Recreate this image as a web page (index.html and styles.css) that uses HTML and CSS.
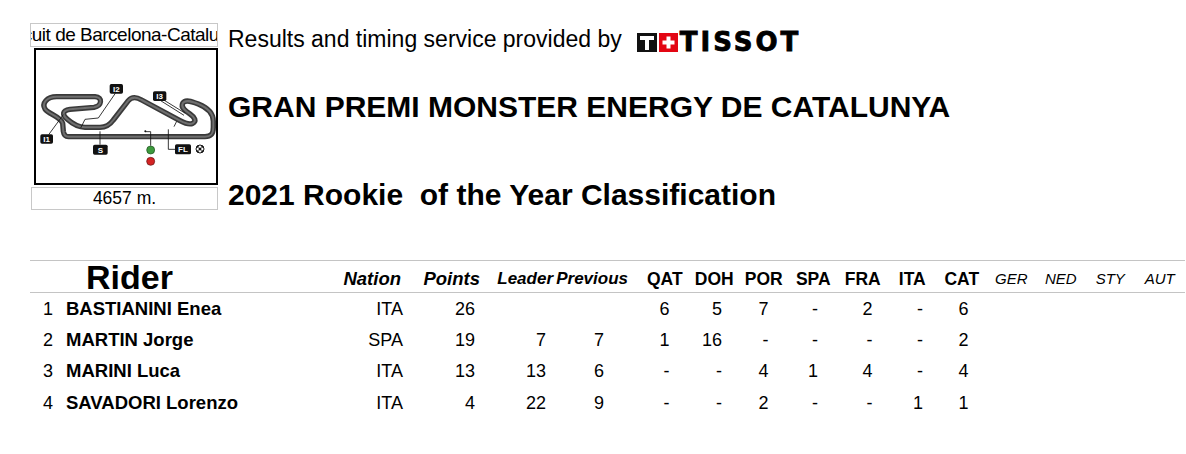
FILE: index.html
```html
<!DOCTYPE html>
<html lang="en">
<head>
<meta charset="utf-8">
<title>2021 Rookie of the Year Classification</title>
<link rel="stylesheet" href="styles.css">
</head>
<body>
<div class="top">
  <div class="circuit">
    <div class="cname"><span>Circuit de Barcelona-Catalunya</span></div>
    <div class="map">
      <svg width="180" height="133" viewBox="18 18 540 399" xmlns="http://www.w3.org/2000/svg">
        <defs>
          <clipPath id="flagclip"><circle cx="510" cy="315" r="12"/></clipPath>
        </defs>
        <g fill="none" stroke-linejoin="round" stroke-linecap="round">
          <path class="trk-out" d="M115 278 L525 278 C545 278 550 268 550 250 L550 232 C550 205 530 190 505 180 C485 172 465 165 458 178 C452 190 465 200 480 210 C495 220 500 232 488 238 C478 243 465 238 450 230 L335 168 C318 158 305 158 295 170 L250 228 C240 242 228 250 210 250 L165 250 C145 250 128 240 112 226 C96 212 96 200 120 196 L192 190 C215 186 220 160 195 158 L80 158 C50 158 35 178 45 195 C55 210 92 218 98 238 L100 262 C102 275 108 278 115 278 Z"/>
          <path class="trk-in" d="M115 278 L525 278 C545 278 550 268 550 250 L550 232 C550 205 530 190 505 180 C485 172 465 165 458 178 C452 190 465 200 480 210 C495 220 500 232 488 238 C478 243 465 238 450 230 L335 168 C318 158 305 158 295 170 L250 228 C240 242 228 250 210 250 L165 250 C145 250 128 240 112 226 C96 212 96 200 120 196 L192 190 C215 186 220 160 195 158 L80 158 C50 158 35 178 45 195 C55 210 92 218 98 238 L100 262 C102 275 108 278 115 278 Z"/>
        </g>
        <g class="ptr" fill="none">
          <path d="M56 272 L100 212"/>
          <path d="M256 148 L205 222 L165 226 L152 252"/>
          <path d="M392 170 L462 214"/>
          <path d="M398 166 L466 208"/>
          <path d="M440 232 L432 248"/>
          <path d="M415 256 L415 316 L436 316"/>
          <path d="M210 262 L210 302"/>
          <path d="M362 305 L362 263 L346 263"/>
        </g>
        <circle cx="346" cy="262" r="3" fill="#111"/>
        <circle cx="362" cy="318" r="12" fill="#3d9a3d" stroke="#1d4d1d" stroke-width="2"/>
        <circle cx="362" cy="352" r="12" fill="#d42323" stroke="#5a1010" stroke-width="2"/>
        <g class="mk">
          <rect x="31" y="271" width="38" height="28" rx="5"/>
          <rect x="239" y="120" width="40" height="29" rx="5"/>
          <rect x="369" y="142" width="40" height="29" rx="5"/>
          <rect x="189" y="302" width="44" height="30" rx="5"/>
          <rect x="435" y="301" width="48" height="30" rx="5"/>
        </g>
        <g class="mk-t">
          <text x="50" y="294">I1</text>
          <text x="259" y="144">I2</text>
          <text x="389" y="166">I3</text>
          <text x="211" y="326">S</text>
          <text x="459" y="325">FL</text>
        </g>
        <g clip-path="url(#flagclip)">
          <circle cx="510" cy="315" r="12" fill="#fff"/>
          <rect x="498" y="303" width="8" height="8" fill="#111"/>
          <rect x="514" y="303" width="8" height="8" fill="#111"/>
          <rect x="506" y="311" width="8" height="8" fill="#111"/>
          <rect x="498" y="319" width="8" height="8" fill="#111"/>
          <rect x="514" y="319" width="8" height="8" fill="#111"/>
        </g>
        <circle cx="510" cy="315" r="12" fill="none" stroke="#111" stroke-width="3"/>
      </svg>
    </div>
    <div class="dist">4657 m.</div>
  </div>
  <div class="heads">
    <div class="provider">
      <span class="prov-text">Results and timing service provided by</span>
      <span class="tissot">
        <svg class="tissot-mark" width="41" height="19" viewBox="0 0 41 19" xmlns="http://www.w3.org/2000/svg">
          <rect x="0" y="0" width="20" height="19" fill="#111"/>
          <rect x="3" y="3" width="14" height="4" fill="#fff"/>
          <rect x="8" y="7" width="4" height="10" fill="#fff"/>
          <rect x="22" y="0" width="19" height="19" fill="#e30613"/>
          <rect x="29.5" y="3.5" width="4" height="12" fill="#fff"/>
          <rect x="25.5" y="7.5" width="12" height="4" fill="#fff"/>
        </svg>
        <span class="tissot-word">TISSOT</span>
      </span>
    </div>
    <h1 class="event">GRAN PREMI MONSTER ENERGY DE CATALUNYA</h1>
    <h2 class="classif">2021 Rookie&nbsp; of the Year Classification</h2>
  </div>
</div>

<table class="standings">
  <colgroup>
    <col class="c-pos"><col class="c-name"><col class="c-nat"><col class="c-pts"><col class="c-ldr"><col class="c-prv">
    <col class="c-race"><col class="c-race"><col class="c-race"><col class="c-race"><col class="c-race"><col class="c-race"><col class="c-race">
    <col class="c-race"><col class="c-race"><col class="c-race"><col class="c-race">
  </colgroup>
  <thead>
    <tr>
      <th class="h-rider" colspan="2">Rider</th>
      <th class="h-nat">Nation</th>
      <th class="h-pts">Points</th>
      <th class="h-ldr">Leader</th>
      <th class="h-prv">Previous</th>
      <th class="h-race">QAT</th>
      <th class="h-race">DOH</th>
      <th class="h-race">POR</th>
      <th class="h-race">SPA</th>
      <th class="h-race">FRA</th>
      <th class="h-race">ITA</th>
      <th class="h-race">CAT</th>
      <th class="h-future">GER</th>
      <th class="h-future">NED</th>
      <th class="h-future">STY</th>
      <th class="h-future">AUT</th>
    </tr>
  </thead>
  <tbody>
    <tr>
      <td class="pos">1</td><td class="name">BASTIANINI Enea</td><td class="nat">ITA</td><td class="pts">26</td><td class="ldr"></td><td class="prv"></td>
      <td class="r qat">6</td><td class="r doh">5</td><td class="r por">7</td><td class="r spa">-</td><td class="r fra">2</td><td class="r ita">-</td><td class="r cat">6</td>
      <td class="r"></td><td class="r"></td><td class="r"></td><td class="r"></td>
    </tr>
    <tr>
      <td class="pos">2</td><td class="name">MARTIN Jorge</td><td class="nat">SPA</td><td class="pts">19</td><td class="ldr">7</td><td class="prv">7</td>
      <td class="r qat">1</td><td class="r doh">16</td><td class="r por">-</td><td class="r spa">-</td><td class="r fra">-</td><td class="r ita">-</td><td class="r cat">2</td>
      <td class="r"></td><td class="r"></td><td class="r"></td><td class="r"></td>
    </tr>
    <tr>
      <td class="pos">3</td><td class="name">MARINI Luca</td><td class="nat">ITA</td><td class="pts">13</td><td class="ldr">13</td><td class="prv">6</td>
      <td class="r qat">-</td><td class="r doh">-</td><td class="r por">4</td><td class="r spa">1</td><td class="r fra">4</td><td class="r ita">-</td><td class="r cat">4</td>
      <td class="r"></td><td class="r"></td><td class="r"></td><td class="r"></td>
    </tr>
    <tr>
      <td class="pos">4</td><td class="name">SAVADORI Lorenzo</td><td class="nat">ITA</td><td class="pts">4</td><td class="ldr">22</td><td class="prv">9</td>
      <td class="r qat">-</td><td class="r doh">-</td><td class="r por">2</td><td class="r spa">-</td><td class="r fra">-</td><td class="r ita">1</td><td class="r cat">1</td>
      <td class="r"></td><td class="r"></td><td class="r"></td><td class="r"></td>
    </tr>
  </tbody>
</table>
</body>
</html>
```

FILE: styles.css
```css
html, body {
  margin: 0;
  padding: 0;
  background: #fff;
}

body {
  font-family: "Liberation Sans", Arial, sans-serif;
  color: #000;
}

.top {
  display: flex;
  height: 260px;
  box-sizing: border-box;
  padding-top: 23px;
}

/* ---------- circuit panel ---------- */
.circuit {
  margin-left: 30px;
  width: 188px;
  display: flex;
  flex-direction: column;
}

.cname {
  height: 22px;
  border: 1px solid #c8c8c8;
  display: flex;
  justify-content: center;
  overflow: hidden;
  font-size: 19px;
  letter-spacing: -0.5px;
  line-height: 22px;
  white-space: nowrap;
}

.cname span {
  flex-shrink: 0;
}

.map {
  margin: 1px 0 0 4px;
  width: 180px;
  height: 133px;
  border: 2px solid #000;
}

.map svg {
  display: block;
}

.trk-out {
  stroke: #3a3a3a;
  stroke-width: 16;
}

.trk-in {
  stroke: #6f6f6f;
  stroke-width: 6;
}

.ptr path {
  stroke: #111;
  stroke-width: 2.5;
}

.mk rect {
  fill: #111;
}

.mk-t text {
  fill: #fff;
  font-family: "Liberation Sans", Arial, sans-serif;
  font-weight: bold;
  font-size: 24px;
  text-anchor: middle;
}

.dist {
  margin: 2px 0 0 1px;
  height: 21px;
  border: 1px solid #c8c8c8;
  text-align: center;
  font-size: 17.5px;
  line-height: 21px;
}

/* ---------- headings ---------- */
.heads {
  margin-left: 10px;
  padding-top: 3px;
}

.provider {
  display: flex;
  align-items: flex-start;
  height: 26px;
}

.prov-text {
  font-size: 23px;
  line-height: 26px;
}

.tissot {
  display: flex;
  align-items: center;
  margin: 7px 0 0 15px;
  height: 19px;
}

.tissot-mark {
  display: block;
}

.tissot-word {
  margin-left: 2px;
  font-family: "DejaVu Sans", sans-serif;
  font-weight: bold;
  font-size: 26px;
  line-height: 19px;
  letter-spacing: 3px;
  -webkit-text-stroke: 0.8px #000;
}

.event,
.classif {
  margin: 0;
  font-size: 30px;
  line-height: 34px;
  font-weight: bold;
  white-space: nowrap;
}

.event {
  margin-top: 37.6px;
}

.classif {
  margin-top: 54px;
}

/* ---------- standings table ---------- */
.standings {
  margin-left: 30px;
  border-collapse: collapse;
  table-layout: fixed;
  width: 1154.5px;
}

.c-pos { width: 28px; }
.c-name { width: 272px; }
.c-nat { width: 75px; }
.c-pts { width: 75px; }
.c-ldr { width: 75px; }
.c-prv { width: 85px; }
.c-race { width: 49.5px; }

.standings thead tr {
  border-top: 1px solid #c4c4c4;
  border-bottom: 1px solid #c4c4c4;
}

.standings th {
  height: 31px;
  padding: 0;
  vertical-align: bottom;
  white-space: nowrap;
  line-height: 26px;
}

.h-rider {
  text-align: left;
  padding-left: 56px !important;
  font-size: 34px;
  line-height: 30px !important;
}

.h-nat,
.h-pts {
  text-align: right;
  font-style: italic;
  font-size: 18.5px;
}

.h-nat { padding-right: 4px !important; }

.h-ldr,
.h-prv {
  text-align: right;
  font-style: italic;
  font-size: 17px;
}

.h-ldr { padding-right: 2px !important; }
.h-prv { padding-right: 12px !important; }

.h-race {
  text-align: center;
  font-size: 17.5px;
}

.h-future {
  text-align: center;
  font-style: italic;
  font-weight: normal;
  font-size: 15px;
}

.standings td {
  height: 31.3px;
  padding: 0;
  font-size: 18px;
  line-height: 20px;
  white-space: nowrap;
  vertical-align: middle;
}

.pos { text-align: right; padding-right: 5px !important; }
.name { font-weight: bold; font-size: 18.5px !important; padding-left: 8px !important; }
.nat { text-align: right; padding-right: 2px !important; }
.pts { text-align: right; padding-right: 5px !important; }
.ldr { text-align: right; padding-right: 9px !important; }
.prv { text-align: right; padding-right: 36px !important; }
.r { text-align: right; padding-right: 20px !important; }
.r.doh { padding-right: 17px !important; }
.r.fra { padding-right: 15px !important; }
.r.ita { padding-right: 14px !important; }
.r.cat { padding-right: 18px !important; }
```
